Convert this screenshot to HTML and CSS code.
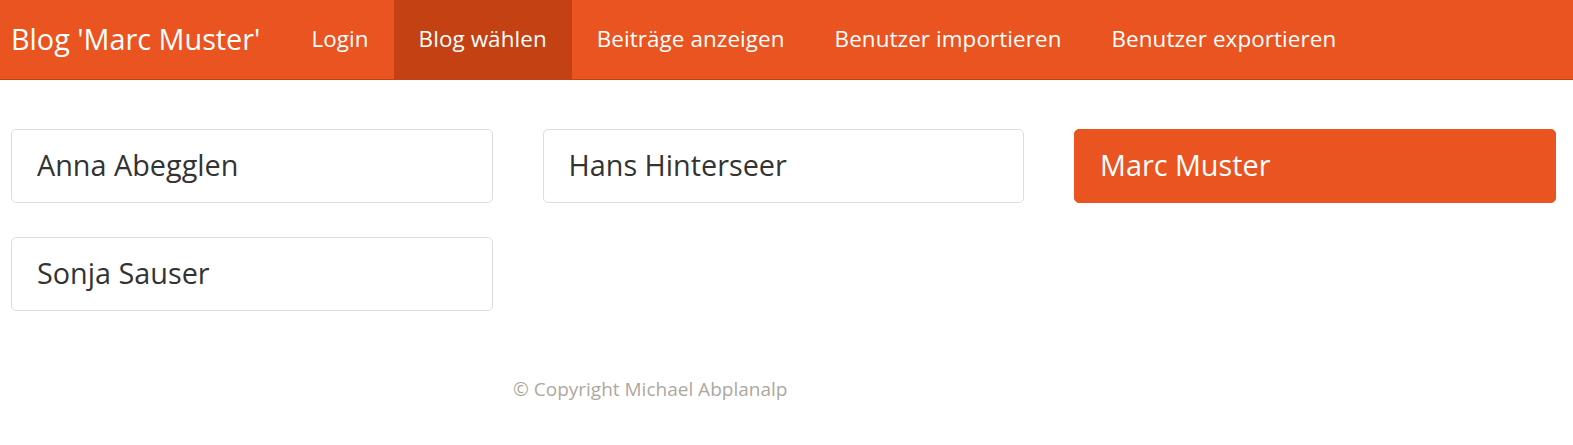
FILE: index.html
```html
<!DOCTYPE html>
<html lang="de">
<head>
<meta charset="utf-8">
<title>Blog wählen</title>
<link rel="stylesheet" href="styles.css">
</head>
<body>
<nav class="navbar">
  <a class="brand" href="#">Blog 'Marc Muster'</a>
  <ul class="nav">
    <li><a href="#">Login</a></li>
    <li class="active"><a href="#">Blog wählen</a></li>
    <li><a href="#">Beiträge anzeigen</a></li>
    <li><a href="#">Benutzer importieren</a></li>
    <li><a href="#">Benutzer exportieren</a></li>
  </ul>
</nav>
<main class="blogs">
  <a class="blog" href="#">Anna Abegglen</a>
  <a class="blog" href="#">Hans Hinterseer</a>
  <a class="blog selected" href="#">Marc Muster</a>
  <a class="blog" href="#">Sonja Sauser</a>
</main>
<footer class="footer">© Copyright Michael Abplanalp</footer>
</body>
</html>
```

FILE: styles.css
```css
* { box-sizing: border-box; }
html, body { margin: 0; padding: 0; background: #fff; }
body { font-family: "Open Sans", Lato, sans-serif; color: #333; }
a { text-decoration: none; }

.navbar {
  display: flex;
  align-items: stretch;
  height: 80px;
  background: #e95420;
  border-bottom: 1px solid #c34113;
}
.brand {
  display: flex;
  align-items: center;
  padding: 0 26px 2px 11px;
  font-size: 28.8px;
  color: #fff;
}
.nav {
  display: flex;
  list-style: none;
  margin: 0;
  padding: 0;
}
.nav li { display: flex; }
.nav a {
  display: flex;
  align-items: center;
  padding: 0 25px 2px;
  font-size: 22.4px;
  letter-spacing: 0.1px;
  color: #fff;
}
.nav li.active a { background: #c34113; }

.blogs {
  display: grid;
  grid-template-columns: repeat(3, 481.5px);
  column-gap: 50px;
  row-gap: 34px;
  padding: 49px 0 0 11px;
}
.blog {
  display: flex;
  align-items: center;
  height: 74px;
  padding: 0 25px 4px;
  border: 1px solid #ddd;
  border-radius: 5px;
  font-size: 28.8px;
  color: #333;
}
.blog.selected {
  background: #e95420;
  border-color: #e95420;
  color: #fff;
}

.footer {
  padding: 65px 0 0 513px;
  font-size: 19px;
  color: #aea79f;
}
```
